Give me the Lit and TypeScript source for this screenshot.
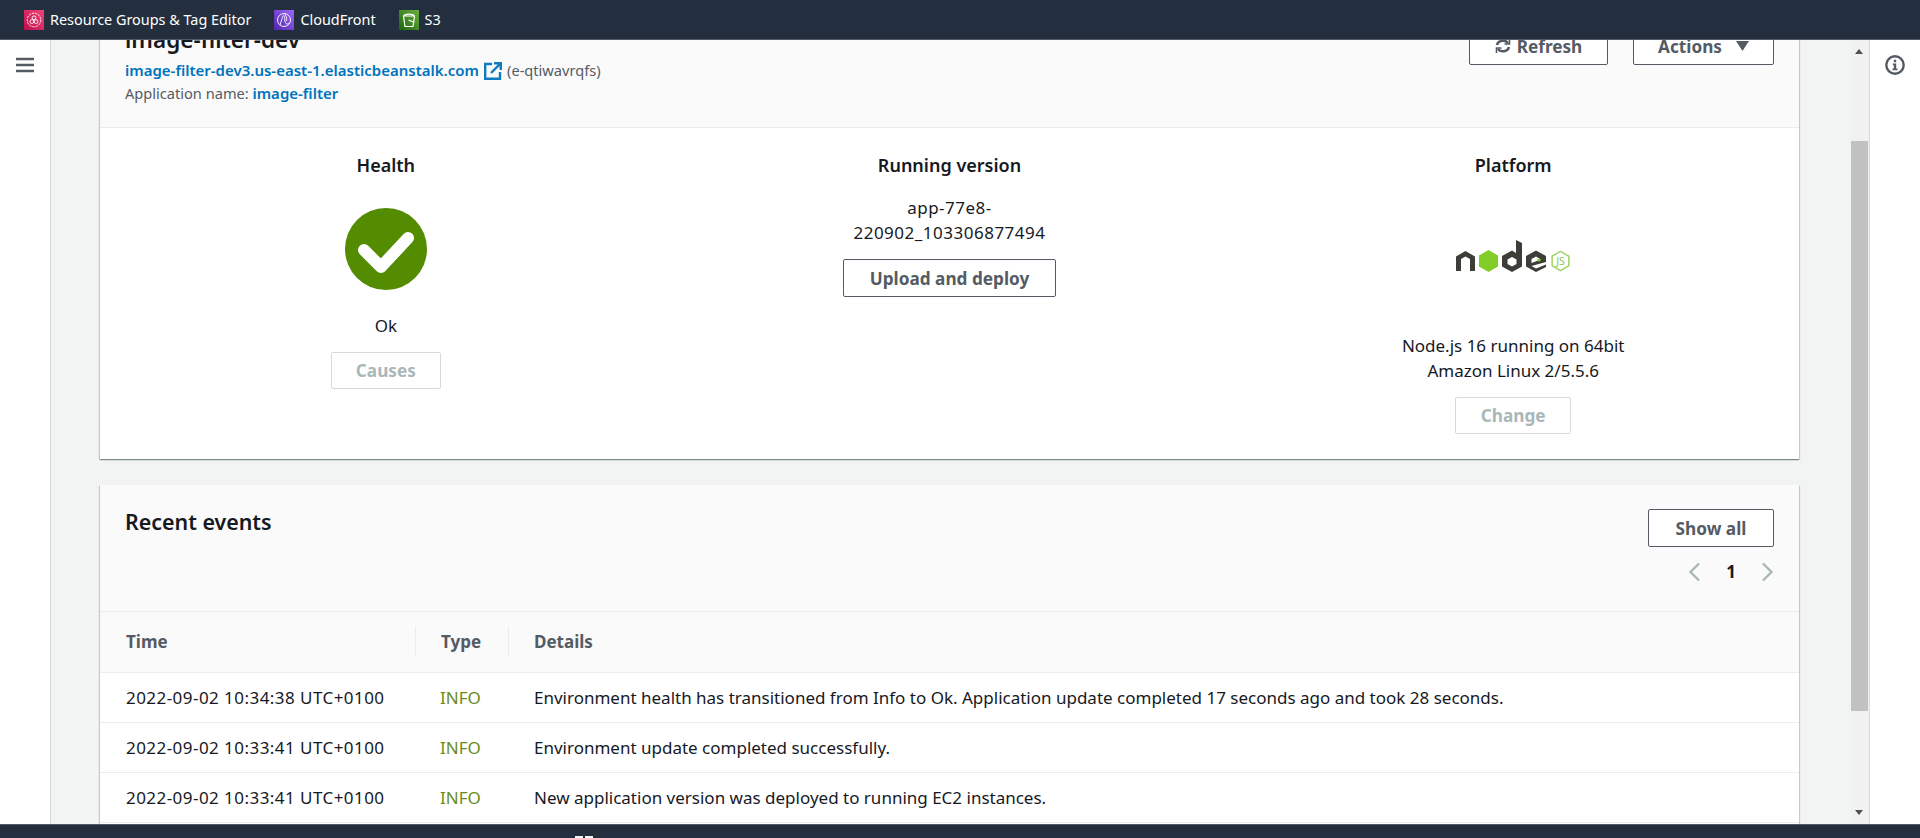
import { LitElement, html, css, svg } from 'lit';
import { customElement } from 'lit/decorators.js';

const EVENTS = [
    ['2022-09-02 10:34:38 UTC+0100', 'Environment health has transitioned from Info to Ok. Application update completed 17 seconds ago and took 28 seconds.'],
    ['2022-09-02 10:33:41 UTC+0100', 'Environment update completed successfully.'],
    ['2022-09-02 10:33:41 UTC+0100', 'New application version was deployed to running EC2 instances.'],
];

const hex = (cx: number, cy: number, r: number) =>
    `M${cx} ${cy - r}L${cx + r * 0.87} ${cy - r / 2}V${cy + r / 2}L${cx} ${cy + r}L${cx - r * 0.87} ${cy + r / 2}V${cy - r / 2}Z`;

@customElement('app-root')
export class AppRoot extends LitElement {
    static styles = css`
:host {
    display: flex;
    flex-direction: column;
    height: 100vh;
    overflow: hidden;
    font-family: "Noto Sans", sans-serif;
    font-size: 17px;
    line-height: 25px;
    color: #16191f;
    background: #fff;
}

.topbar {
    flex: none;
    height: 39px;
    display: flex;
    align-items: center;
    gap: 23px;
    padding: 0 0 0 24px;
    background: #232f3e;
    border-bottom: 1px solid #545b64;
    color: #fff;
}

.fav {
    display: flex;
    align-items: center;
    gap: 6px;
    font-size: 14.4px;
}

.fav svg {
    display: block;
}

.middle {
    flex: 1;
    min-height: 0;
    display: flex;
}

.side {
    flex: none;
    width: 50px;
    border-right: 1px solid #d5dbdb;
    padding-top: 17px;
    display: flex;
    justify-content: center;
}

.main {
    flex: 1;
    min-width: 0;
    background: #f2f3f3;
    padding: 0 52px 0 49px;
    overflow: hidden;
}

.card {
    background: #fff;
    box-shadow: 0 1px 1px 0 rgba(0, 28, 36, 0.3), 1px 1px 1px 0 rgba(0, 28, 36, 0.15), -1px 1px 1px 0 rgba(0, 28, 36, 0.15);
}

.env {
    margin-top: -48px;
}

.card-head {
    box-sizing: border-box;
    background: #fafafa;
    border-bottom: 1px solid #eaeded;
    display: flex;
    justify-content: space-between;
    padding: 0 25px;
}

.env .card-head {
    height: 136px;
    padding-top: 33px;
}

h1 {
    margin: 0;
    font-size: 22.5px;
    line-height: 30px;
    font-weight: 600;
}

.sub {
    font-size: 14.6px;
    line-height: 23px;
    color: #545b64;
}

.sub.link-line {
    margin-top: 4px;
}

a {
    color: #0073bb;
    font-size: 15px;
    font-weight: 600;
    text-decoration: none;
}

.ext {
    vertical-align: -4px;
    margin: 0 1.5px 0 1px;
}

.actions {
    display: flex;
    gap: 25px;
    align-items: flex-start;
}

.btn {
    box-sizing: border-box;
    display: inline-flex;
    align-items: center;
    justify-content: center;
    height: 38px;
    border: 1px solid #545b64;
    border-radius: 2px;
    background: #fff;
    color: #545b64;
    font-weight: 700;
    font-size: 17.2px;
    gap: 6px;
}

.btn.off {
    height: 37px;
    border-color: #d5dbdb;
    color: #aab7b8;
}

.refresh {
    width: 139px;
    margin-top: 2px;
}

.action-btn {
    width: 141px;
    margin-top: 2px;
    gap: 14px;
}

.env-body {
    box-sizing: border-box;
    height: 331px;
    display: grid;
    grid-template-columns: repeat(3, 1fr);
    padding: 0 4px;
    text-align: center;
}

.col {
    padding-top: 25px;
    display: flex;
    flex-direction: column;
    align-items: center;
}

.col h3 {
    margin: 0;
    font-size: 18px;
    line-height: 24px;
    font-weight: 600;
}

.col p {
    margin: 0;
    font-size: 17px;
    line-height: 25px;
}

.tick {
    display: block;
    margin-top: 31px;
}

.col .status {
    margin-top: 23px;
}

.causes {
    width: 110px;
    margin-top: 14px;
}

.col .version {
    margin-top: 18px;
    width: 220px;
    letter-spacing: 0.5px;
}

.upload {
    width: 213px;
    margin-top: 14px;
}

.logo {
    margin-top: 63px;
}

.logo svg {
    display: block;
}

.col .plat {
    margin-top: 61px;
}

.change {
    width: 116px;
    margin-top: 14px;
}

.events {
    margin-top: 26px;
    padding-bottom: 40px;
}

.events .card-head {
    height: 127px;
    padding-top: 24px;
}

h2 {
    margin: 0;
    font-size: 21.4px;
    line-height: 26px;
    font-weight: 600;
}

.head-right {
    display: flex;
    flex-direction: column;
    align-items: flex-end;
}

.show {
    width: 126px;
}

.pager {
    margin-top: 15px;
    display: flex;
    align-items: center;
    gap: 26px;
    font-weight: 700;
    font-size: 17px;
    line-height: 20px;
}

.pager svg {
    display: block;
}

.thead,
.row {
    display: grid;
    grid-template-columns: 315px 93px 1fr;
}

.thead {
    box-sizing: border-box;
    height: 61px;
    background: #fafafa;
    border-bottom: 1px solid #eaeded;
    align-items: center;
    color: #545b64;
    font-weight: 700;
    font-size: 17px;
}

.th {
    padding-left: 26px;
    height: 30px;
    line-height: 30px;
}

.th + .th {
    padding-left: 25px;
    border-left: 1px solid #eaeded;
}

.row {
    box-sizing: border-box;
    height: 50px;
    border-bottom: 1px solid #eaeded;
    align-items: center;
    white-space: nowrap;
}

.row > div {
    padding-left: 26px;
}

.row .time {
    letter-spacing: 0.45px;
}

.row .info {
    color: #6b8c1a;
    padding-left: 25px;
}

.scrollbar {
    flex: none;
    width: 18px;
    position: relative;
    background: #f1f1f1;
}

.thumb {
    position: absolute;
    left: 0;
    right: 1px;
    top: 101px;
    height: 570px;
    background: #c1c1c1;
}

.arrow {
    position: absolute;
    left: 4px;
    width: 0;
    height: 0;
    border-left: 4.5px solid transparent;
    border-right: 4.5px solid transparent;
}

.arrow.up {
    top: 9px;
    border-bottom: 5px solid #505050;
}

.arrow.down {
    bottom: 9px;
    border-top: 5px solid #505050;
}

.panel {
    flex: none;
    width: 50px;
    border-left: 1px solid #d5dbdb;
    display: flex;
    justify-content: center;
    padding-top: 15px;
}

.panel svg {
    display: block;
}

.footer {
    flex: none;
    height: 13px;
    position: relative;
    background: #232f3e;
    border-top: 1px solid #545b64;
}

.footer svg {
    position: absolute;
    left: 575px;
    top: 11px;
}
`;

    private favIcon(bg1: string, bg2: string, glyph: unknown, id: string) {
        return html`<svg width="20" height="20" viewBox="0 0 20 20">
            <defs><linearGradient id=${id} x1="0" y1="1" x2="1" y2="0"><stop offset="0" stop-color=${bg1}></stop><stop offset="1" stop-color=${bg2}></stop></linearGradient></defs>
            <rect width="20" height="20" fill="url(#${id})"></rect>
            <g fill="none" stroke="#fff" stroke-width="0.9">${glyph}</g>
        </svg>`;
    }

    private nodeLogo() {
        const dark = '#3e3e38';
        const green = '#83cd29';
        return html`<svg width="114" height="32" viewBox="0 0 114 32">
            <path d="M9.5 11L19 16.5V31H14V19L9.5 16.5L5 19V31H0V16.5Z" fill=${dark}></path>
            <path d=${hex(32.5, 21, 11)} fill=${green}></path>
            <path fill-rule="evenodd" d="M56 10.5L60 13V0L66 3V26.5L56 32L46 26.5V16ZM56 17L51.5 19.5V24L56 26.5L60.5 24V19.5Z" fill=${dark}></path>
            <path fill-rule="evenodd" d="M80 10.5L90 16V22L75.5 26L80 28.5L90 24.5V27L80 32L70 26.5V16ZM75.5 19V23L85 19.5L80 16.5Z" fill=${dark}></path>
            <circle cx="83" cy="20" r="1.6" fill=${green}></circle>
            <path d=${hex(104.5, 21, 9.6)} fill="#fff" stroke="#a4d66b" stroke-width="1.6"></path>
            <text x="104.5" y="25" text-anchor="middle" font-size="10.5" fill="#8cc84b" font-family="Noto Sans">JS</text>
        </svg>`;
    }

    render() {
        return html`
<div class="topbar">
    <div class="fav">
        ${this.favIcon('#bd0f4b', '#f0457a', svg`<circle cx="10" cy="10" r="6.8" stroke-dasharray="2.4 0.9"></circle><circle cx="10" cy="7.8" r="1.9"></circle><circle cx="7.9" cy="11.6" r="1.9"></circle><circle cx="12.1" cy="11.6" r="1.9"></circle>`, 'g1')}
        Resource Groups &amp; Tag Editor
    </div>
    <div class="fav">
        ${this.favIcon('#4d27a8', '#a166ff', svg`<circle cx="10" cy="10" r="6.5"></circle><path d="M6 15C8 9 8.5 6 9.5 5.5C11 6 10 11 12 13.5C13 14.5 14 14 15 13M11 4C12.5 7 13 9 12.5 11"></path>`, 'g2')}
        CloudFront
    </div>
    <div class="fav">
        ${this.favIcon('#1b660f', '#6cae3e', svg`<path d="M4.5 6H15.5L14 16.5H6ZM4.5 6C6 3.5 14 3.5 15.5 6M9.5 10L15.5 12.5" stroke-width="1.2"></path>`, 'g3')}
        S3
    </div>
</div>
<div class="middle">
    <div class="side">
        <svg width="18" height="16" viewBox="0 0 18 16"><path d="M0 2H18M0 8H18M0 14H18" stroke="#545b64" stroke-width="2.4"></path></svg>
    </div>
    <div class="main">
        <section class="card env">
            <div class="card-head">
                <div>
                    <h1>image-filter-dev</h1>
                    <div class="sub link-line"><a href="#">image-filter-dev3.us-east-1.elasticbeanstalk.com</a>
                        <svg class="ext" width="18" height="18" viewBox="0 0 18 18" fill="none" stroke="#0f7cc0" stroke-width="2.4"><path d="M8 2H1.2V16.8H16V10M10 1.2H16.8V8M16.8 1.2L7 11"></path></svg>
                        (e-qtiwavrqfs)</div>
                    <div class="sub">Application name: <a href="#">image-filter</a></div>
                </div>
                <div class="actions">
                    <div class="btn refresh">
                        <svg width="16" height="16" viewBox="0 0 16 16" fill="none" stroke="#545b64" stroke-width="2.5"><path d="M2 7C3 2.5 10 1 13 5M14 9C13 13.5 6 15 3 11"></path><path d="M14.5 1V6H9.5M1.5 15V10H6.5" stroke-width="1.6"></path></svg>
                        Refresh
                    </div>
                    <div class="btn action-btn">Actions
                        <svg width="13" height="10" viewBox="0 0 13 10"><path d="M0 0H13L6.5 10Z" fill="#545b64"></path></svg>
                    </div>
                </div>
            </div>
            <div class="env-body">
                <div class="col">
                    <h3>Health</h3>
                    <svg class="tick" width="82" height="82" viewBox="0 0 82 82">
                        <circle cx="41" cy="41" r="41" fill="#538b01"></circle>
                        <path d="M19 42L36 59L63 30" fill="none" stroke="#fff" stroke-width="12" stroke-linejoin="round" stroke-linecap="round"></path>
                    </svg>
                    <p class="status">Ok</p>
                    <div class="btn off causes">Causes</div>
                </div>
                <div class="col">
                    <h3>Running version</h3>
                    <p class="version">app-77e8-220902_103306877494</p>
                    <div class="btn upload">Upload and deploy</div>
                </div>
                <div class="col">
                    <h3>Platform</h3>
                    <div class="logo">${this.nodeLogo()}</div>
                    <p class="plat">Node.js 16 running on 64bit<br />Amazon Linux 2/5.5.6</p>
                    <div class="btn off change">Change</div>
                </div>
            </div>
        </section>
        <section class="card events">
            <div class="card-head">
                <h2>Recent events</h2>
                <div class="head-right">
                    <div class="btn show">Show all</div>
                    <div class="pager">
                        <svg width="12" height="20" viewBox="0 0 12 20" fill="none" stroke="#aab7b8" stroke-width="2.4"><path d="M11 1.5L2.5 10L11 18.5"></path></svg>
                        <span>1</span>
                        <svg width="12" height="20" viewBox="0 0 12 20" fill="none" stroke="#aab7b8" stroke-width="2.4"><path d="M1 1.5L9.5 10L1 18.5"></path></svg>
                    </div>
                </div>
            </div>
            <div class="thead">
                <div class="th">Time</div>
                <div class="th">Type</div>
                <div class="th">Details</div>
            </div>
            ${EVENTS.map(([time, text]) => html`
            <div class="row">
                <div class="time">${time}</div>
                <div class="info">INFO</div>
                <div>${text}</div>
            </div>`)}
        </section>
    </div>
    <div class="scrollbar">
        <div class="arrow up"></div>
        <div class="thumb"></div>
        <div class="arrow down"></div>
    </div>
    <div class="panel">
        <svg width="20" height="20" viewBox="0 0 20 20">
            <circle cx="10" cy="10" r="8.7" fill="none" stroke="#545b64" stroke-width="2.4"></circle>
            <path d="M7.8 8.5H11.2V13.5H12.5V15.2H7.5V13.5H8.8V10.2H7.8ZM8.8 4.8H11.2V7.2H8.8Z" fill="#545b64"></path>
        </svg>
    </div>
</div>
<div class="footer">
    <svg width="18" height="4" viewBox="0 0 18 4"><path d="M0 0H8V4H0ZM10 0H18V4H10Z" fill="#f2f3f3"></path></svg>
</div>
`;
    }
}
